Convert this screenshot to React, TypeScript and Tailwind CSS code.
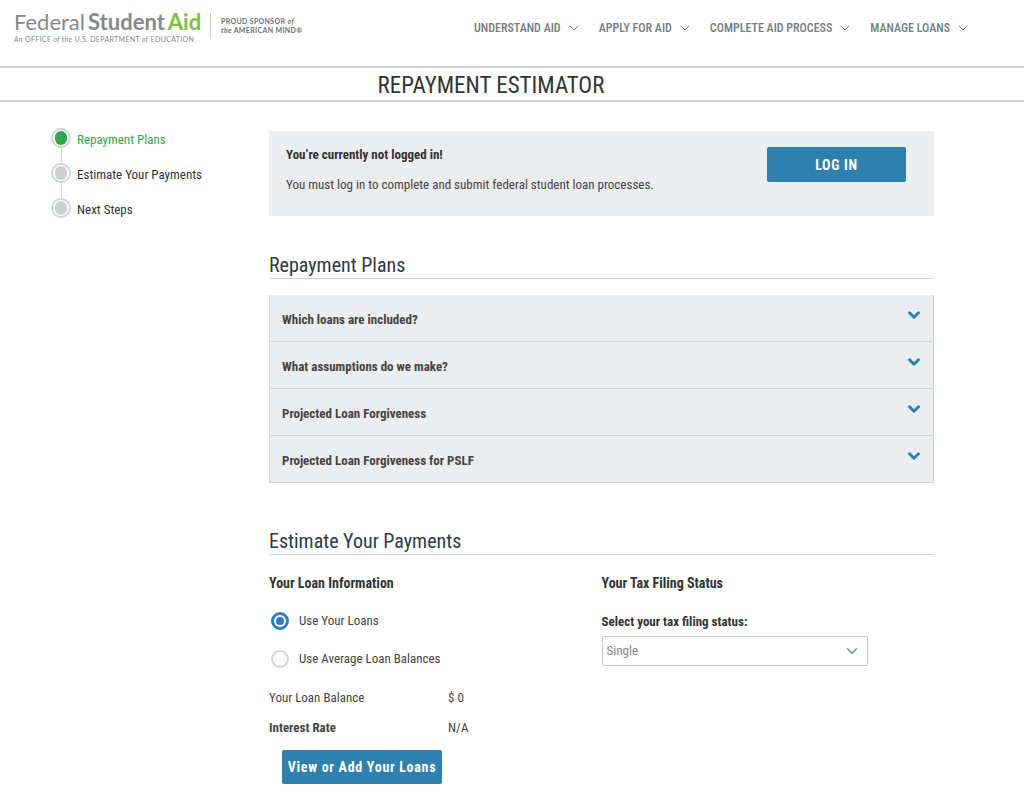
import React, { useState } from "react";
import { ChevronDown } from "lucide-react";

const navLinks = ["Understand Aid", "Apply For Aid", "Complete Aid Process", "Manage Loans"];

const steps = [
  { label: "Repayment Plans", active: true },
  { label: "Estimate Your Payments", active: false },
  { label: "Next Steps", active: false },
];

const questions = [
  "Which loans are included?",
  "What assumptions do we make?",
  "Projected Loan Forgiveness",
  "Projected Loan Forgiveness for PSLF",
];

const Logo = () => (
  <a href="#" className="flex items-center font-['Lato',sans-serif]">
    <div className="w-[188px] shrink-0">
      <div className="text-[22px] leading-[27px] text-[#85898b] whitespace-nowrap flex gap-[3px]">
        <span>Federal</span>
        <span className="font-bold">Student</span>
        <span className="font-bold text-[#7ac143]">Aid</span>
      </div>
      <div className="text-[7px] leading-[9px] tracking-wider text-[#85898b] whitespace-nowrap">
        <i>An</i> OFFICE <i>of the</i> U.S. DEPARTMENT <i>of</i> EDUCATION
      </div>
    </div>
    <div className="ml-2 h-[26px] border-l border-[#c5c9ca] pl-2.5 flex flex-col justify-center text-[7px] leading-[9px] font-bold tracking-wider text-[#6d7173] whitespace-nowrap">
      <span>
        PROUD SPONSOR <i>of</i>
      </span>
      <span>
        <i>the</i> AMERICAN MIND®
      </span>
    </div>
  </a>
);

const Header = () => (
  <header className="flex items-start justify-between h-[66px] pl-3.5 pr-[53px] pt-2">
    <Logo />
    <nav className="flex gap-[17px] pt-3">
      {navLinks.map((link) => (
        <button
          key={link}
          className="flex items-center gap-[5px] text-xs leading-4 font-medium uppercase text-[#747c7d] whitespace-nowrap"
        >
          {link}
          <ChevronDown className="size-4" strokeWidth={1.5} />
        </button>
      ))}
    </nav>
  </header>
);

const Sidebar = () => (
  <ol className="w-[218px] shrink-0">
    {steps.map((step, i) => (
      <li key={step.label} className="flex gap-1.5">
        <div className="flex flex-col items-center">
          <span className="size-5 rounded-full border-2 border-[#d0d5d5] flex items-center justify-center">
            <span
              className={
                step.active
                  ? "w-3 h-[14px] rounded-full bg-[#31a752]"
                  : "w-3 h-[14px] rounded-full bg-[#cdd0d1]"
              }
            ></span>
          </span>
          {i < steps.length - 1 && <span className="w-px h-[15px] bg-[#d0d5d5]"></span>}
        </div>
        <a
          href="#"
          className={
            step.active ? "leading-6 text-[#31a752]" : "leading-6 text-[#333]"
          }
        >
          {step.label}
        </a>
      </li>
    ))}
  </ol>
);

const SectionTitle = ({ children }: { children: React.ReactNode }) => (
  <h2 className="text-xl leading-[26px] text-[#2d3a48] border-b border-[#d3d6d7]">{children}</h2>
);

const Radio = ({
  label,
  checked,
  onChange,
}: {
  label: string;
  checked: boolean;
  onChange: () => void;
}) => (
  <label className="flex items-center gap-2.5 h-[18px] pl-0.5">
    <input
      type="radio"
      name="loans"
      checked={checked}
      onChange={onChange}
      className="appearance-none size-[18px] rounded-full border-2 border-[#d3d8d8] checked:border-[3px] checked:border-[#2f7dc0] checked:bg-[#2f7dc0] checked:bg-clip-content checked:p-0.5"
    />
    {label}
  </label>
);

const App = () => {
  const [source, setSource] = useState("own");

  return (
    <div className="bg-white text-[13px] leading-5 text-[#444] font-['Roboto_Condensed','Liberation_Sans_Narrow',sans-serif]">
      <Header />
      <div className="border-y-2 border-[#ced5d3] h-9 pt-[3px] pr-[42px] flex items-center justify-center">
        <h1 className="text-[23px] leading-7 text-[#333]">REPAYMENT ESTIMATOR</h1>
      </div>

      <div className="flex pt-[26px] pl-[51px] pr-[90px]">
        <Sidebar />
        <main className="flex-1 pt-[3px]">
          <section className="bg-[#ecedef] h-[85px] pl-[17px] pr-7 pt-4 flex justify-between items-start">
            <div>
              <p className="font-bold leading-4 text-[#333]">You’re currently not logged in!</p>
              <p className="mt-3">You must log in to complete and submit federal student loan processes.</p>
            </div>
            <button className="w-[139px] h-[35px] rounded-xs bg-[#2e80ae] text-sm text-white font-bold tracking-wider">
              LOG IN
            </button>
          </section>

          <section className="mt-9">
            <SectionTitle>Repayment Plans</SectionTitle>
            <div className="mt-4 border-x border-[#d3d6d7] bg-[#ecedef]">
              {questions.map((question) => (
                <button
                  key={question}
                  className="w-full flex items-start justify-between border-b border-[#d3d6d7] pl-3 pr-2.5 pt-[11px] pb-2 font-bold text-[#444]"
                >
                  <span className="leading-[27px]">{question}</span>
                  <ChevronDown className="size-[18px] text-[#2e80ae]" strokeWidth={4} />
                </button>
              ))}
            </div>
          </section>

          <section className="mt-[45px]">
            <SectionTitle>Estimate Your Payments</SectionTitle>
            <div className="grid grid-cols-2 pt-[18px]">
              <div>
                <h3 className="text-sm leading-5 font-bold text-[#333]">Your Loan Information</h3>
                <div className="mt-[19px] flex flex-col gap-5">
                  <Radio
                    label="Use Your Loans"
                    checked={source === "own"}
                    onChange={() => setSource("own")}
                  />
                  <Radio
                    label="Use Average Loan Balances"
                    checked={source === "average"}
                    onChange={() => setSource("average")}
                  />
                </div>
                <dl className="mt-5 grid grid-cols-[179px_1fr] gap-y-2.5">
                  <dt>Your Loan Balance</dt>
                  <dd>$ 0</dd>
                  <dt className="font-bold">Interest Rate</dt>
                  <dd>N/A</dd>
                </dl>
                <button className="mt-3 ml-[13px] w-40 h-[34px] rounded-xs bg-[#2e80ae] text-sm text-white font-bold tracking-wider">
                  View or Add Your Loans
                </button>
              </div>
              <div>
                <h3 className="text-sm leading-5 font-bold text-[#333]">Your Tax Filing Status</h3>
                <label htmlFor="status" className="mt-[19px] block font-bold text-[#333]">
                  Select your tax filing status:
                </label>
                <div className="mt-1 w-[266px] grid items-center">
                  <select
                    id="status"
                    className="appearance-none col-start-1 row-start-1 w-full h-[30px] pl-1 rounded-xs border border-[#c3c8c9] bg-white text-[#7f8788]"
                  >
                    <option>Single</option>
                    <option>Married Filing Jointly</option>
                    <option>Married Filing Separately</option>
                    <option>Head of Household</option>
                  </select>
                  <ChevronDown className="col-start-1 row-start-1 justify-self-end mr-[7px] size-[18px] text-[#7f8788] pointer-events-none" />
                </div>
              </div>
            </div>
          </section>
        </main>
      </div>
    </div>
  );
};

export default App;
